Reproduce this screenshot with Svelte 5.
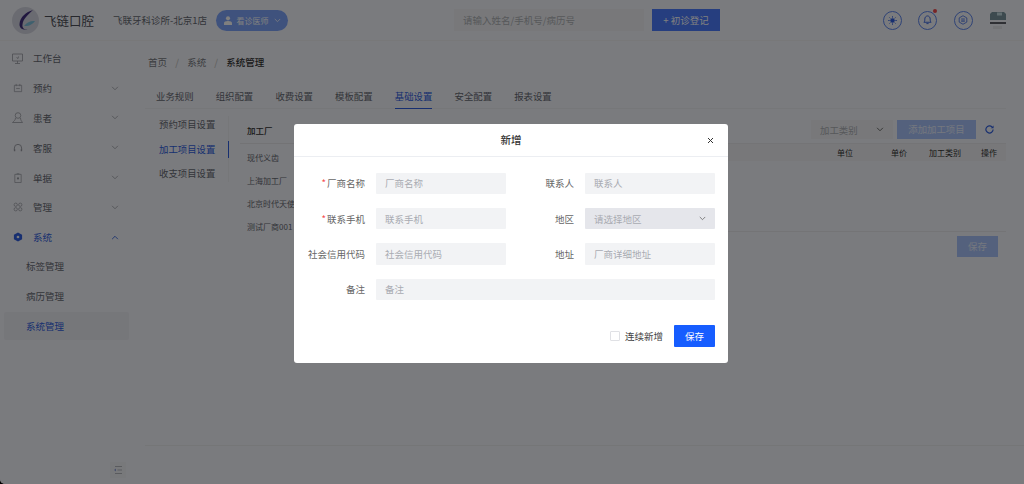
<script>
  const menu = [
    { label: '工作台', icon: 'desk' },
    { label: '预约', icon: 'cal', arrow: 'down' },
    { label: '患者', icon: 'user', arrow: 'down' },
    { label: '客服', icon: 'head', arrow: 'down' },
    { label: '单据', icon: 'doc', arrow: 'down' },
    { label: '管理', icon: 'grid', arrow: 'down' },
    { label: '系统', icon: 'gear', arrow: 'up', active: true }
  ];
  const subMenu = ['标签管理', '病历管理', '系统管理'];
  const tabs = ['业务规则', '组织配置', '收费设置', '模板配置', '基础设置', '安全配置', '报表设置'];
  const sideItems = ['预约项目设置', '加工项目设置', '收支项目设置'];
  const factories = ['现代义齿', '上海加工厂', '北京时代天使', '测试厂商001'];
</script>

<div class="page">
  <header class="topbar">
    <div class="logo">
      <svg width="27" height="27" viewBox="0 0 27 27">
        <circle cx="13.5" cy="13.5" r="13.5" fill="#d5d7e2" />
        <path d="M21 3C14 5 8 10 7.5 17c-.3 4 3 6.500 8 5.500-4 .2-5.500-2-5-5C11 12 16 8 21 3z" fill="#43307f" />
        <path d="M12 19c3-4 7-5.500 11-5-2 3-6 5.500-11 5z" fill="#7fc0dc" />
      </svg>
      <span class="brand">飞链口腔</span>
    </div>
    <span class="clinic">飞联牙科诊所-北京1店</span>
    <button class="role">
      <svg width="8" height="9" viewBox="0 0 9 10"><circle cx="4.500" cy="2.600" r="2.300" fill="#fff" /><path d="M0 10V8c0-1.500 1.500-2.400 4.500-2.400S9 6.500 9 8v2z" fill="#fff" /></svg>
      看诊医师
      <svg width="7" height="5" viewBox="0 0 9 6"><path d="M1 1l3.500 3.500L8 1" fill="none" stroke="#fff" stroke-width="1" /></svg>
    </button>
    <div class="search">请输入姓名/手机号/病历号</div>
    <button class="register">+ 初诊登记</button>
    <div class="tools">
      <span class="tool">
        <svg width="9" height="9" viewBox="0 0 10 10"><circle cx="5" cy="5" r="2.500" fill="#2f5fe0" /><path d="M5 0v2M5 8v2M0 5h2M8 5h2M1.500 1.500l1.200 1.200M7.300 7.300l1.200 1.200M8.500 1.500L7.300 2.700M2.700 7.300L1.500 8.500" stroke="#2f5fe0" stroke-width="0.800" /></svg>
      </span>
      <span class="tool dot">
        <svg width="9" height="10" viewBox="0 0 10 11"><path d="M1 8c1-1 1-2 1-3.500C2 2.500 3.300 1 5 1s3 1.500 3 3.500C8 6 8 7 9 8z" fill="none" stroke="#2f5fe0" /><path d="M3.800 9.500h2.400" stroke="#2f5fe0" /></svg>
      </span>
      <span class="tool">
        <svg width="10" height="10" viewBox="0 0 11 11"><path d="M5.500 .8l4.200 2.400v4.600l-4.200 2.400-4.200-2.400V3.200z" fill="none" stroke="#2f5fe0" stroke-width="0.800" /><path d="M3.500 4.300h4M3.500 5.700h4M3.500 7h4" stroke="#2f5fe0" stroke-width="0.700" /></svg>
      </span>
      <svg class="avatar" width="16" height="18" viewBox="0 0 16 18">
        <path d="M2 0h12l2 2v6H0V2z" fill="#7a959e" /><rect x="7" y="0.500" width="5" height="3" fill="#c5dde2" />
        <rect x="0" y="10" width="16" height="2" fill="#5f6168" /><rect x="3" y="14" width="9" height="3" fill="#e6e8ec" />
      </svg>
    </div>
  </header>

  <div class="body">
    <nav class="sidebar">
      <ul>
        {#each menu as item}
          <li class="menu-item" class:active={item.active}>
            <span class="menu-icon">
              {#if item.icon === 'desk'}
                <svg width="11" height="11" viewBox="0 0 11 11"><path d="M.5 1h10v7H.500zM5.500 8v2.500M3 10.500h5M4.500 4.500l1.500 1 .5-2" fill="none" stroke="#9a9da5" stroke-width="0.800" /></svg>
              {:else if item.icon === 'cal'}
                <svg width="10" height="10" viewBox="0 0 11 11"><path d="M1.500 2.500h8v7h-8zM3.500 1v2.500M7.500 1v2.500M3.500 6h4" fill="none" stroke="#9a9da5" stroke-width="0.800" /></svg>
              {:else if item.icon === 'user'}
                <svg width="11" height="12" viewBox="0 0 11 12"><circle cx="6" cy="3.500" r="2.800" fill="none" stroke="#9a9da5" stroke-width="0.800" /><path d="M3.500 6C3.500 8 2 9 .5 10.500h10C9.500 9 8.500 8 8.500 6" fill="none" stroke="#9a9da5" stroke-width="0.800" /></svg>
              {:else if item.icon === 'head'}
                <svg width="10" height="10" viewBox="0 0 11 11"><path d="M1.500 8V5.500a4 4 0 0 1 8 0V8" fill="none" stroke="#9a9da5" /><path d="M1 7h1.500v2H1zM8.500 7H10v2H8.500z" fill="#9a9da5" /></svg>
              {:else if item.icon === 'doc'}
                <svg width="10" height="10" viewBox="0 0 11 11"><path d="M2 1.500h7v9H2zM4 .8h3" fill="none" stroke="#9a9da5" stroke-width="0.800" /><circle cx="5.500" cy="6" r="1.200" fill="#9a9da5" /></svg>
              {:else if item.icon === 'grid'}
                <svg width="10" height="10" viewBox="0 0 11 11"><g fill="none" stroke="#9a9da5" stroke-width="0.800"><circle cx="3" cy="3" r="1.800" /><circle cx="8" cy="3" r="1.800" /><circle cx="3" cy="8" r="1.800" /><circle cx="8" cy="8" r="1.800" /></g></svg>
              {:else}
                <svg width="10" height="10" viewBox="0 0 11 11"><path d="M5.500 .5l4.500 2.500v5l-4.500 2.500L1 8V3z" fill="#2f5fe0" /><circle cx="5.500" cy="5.500" r="1.500" fill="#f5f6fa" /></svg>
              {/if}
            </span>
            <span class="menu-label">{item.label}</span>
            {#if item.arrow}
              <svg class="arrow" class:up={item.arrow === 'up'} width="8" height="5" viewBox="0 0 9 6"><path d="M1 1l3.500 3.500L8 1" fill="none" stroke="currentColor" stroke-width="1" /></svg>
            {/if}
          </li>
        {/each}
        {#each subMenu as sub, i}
          <li class="sub-item" class:current={i === 2}>{sub}</li>
        {/each}
      </ul>
      <div class="collapse">
        <svg width="9" height="8" viewBox="0 0 9 8"><path d="M1 .5h7M3.500 4H8M1 7.500h7" stroke="#b4b6bd" /><path d="M0 4l2-1.500v3z" fill="#8fa0d8" /></svg>
      </div>
    </nav>

    <main class="content">
      <div class="crumbs">
        <span>首页</span><i>/</i><span>系统</span><i>/</i><b>系统管理</b>
      </div>
      <div class="tabs">
        {#each tabs as tab, i}
          <span class="tab" class:on={i === 4}>{tab}</span>
        {/each}
      </div>
      <div class="panel">
        <div class="side">
          {#each sideItems as s, i}
            <div class="side-item" class:on={i === 1}>{s}</div>
          {/each}
        </div>
        <div class="factory">
          <div class="factory-head">加工厂</div>
          {#each factories as f}
            <div class="factory-row">{f}</div>
          {/each}
        </div>
        <div class="detail">
          <div class="detail-tools">
            <span class="type-select">加工类别
              <svg width="8" height="5" viewBox="0 0 9 6"><path d="M1 1l3.500 3.500L8 1" fill="none" stroke="#555" stroke-width="1" /></svg>
            </span>
            <span class="add-btn">添加加工项目</span>
            <svg width="9" height="9" viewBox="0 0 10 10"><path d="M9 5a4 4 0 1 1-1.200-2.900" fill="none" stroke="#2f5fe0" stroke-width="1.300" /><path d="M9.500 .5v3.200H6.300z" fill="#2f5fe0" /></svg>
          </div>
          <div class="thead">
            <span class="c1">单位</span><span class="c2">单价</span><span class="c3">加工类别</span><span class="c4">操作</span>
          </div>
          <div class="tfoot"><span class="save-off">保存</span></div>
        </div>
      </div>
      <div class="bottom-line"></div>
    </main>
  </div>

  <div class="mask">
    <section class="dialog">
      <div class="dialog-head">
        <h2>新增</h2>
        <svg class="close" width="7" height="7" viewBox="0 0 7 7"><path d="M1 1l5 5M6 1L1 6" stroke="#333" stroke-width="1" /></svg>
      </div>
      <div class="form">
        <label><span class="key"><em>*</em>厂商名称</span><span class="field">厂商名称</span></label>
        <label><span class="key">联系人</span><span class="field">联系人</span></label>
        <label><span class="key"><em>*</em>联系手机</span><span class="field">联系手机</span></label>
        <label><span class="key">地区</span>
          <span class="field select">请选择地区
            <svg width="7" height="5" viewBox="0 0 9 6"><path d="M1 1l3.500 3.500L8 1" fill="none" stroke="#666" stroke-width="1" /></svg>
          </span>
        </label>
        <label><span class="key">社会信用代码</span><span class="field">社会信用代码</span></label>
        <label><span class="key">地址</span><span class="field">厂商详细地址</span></label>
        <label class="wide"><span class="key">备注</span><span class="field">备注</span></label>
      </div>
      <div class="dialog-foot">
        <span class="check"></span>
        <span class="check-text">连续新增</span>
        <button class="save">保存</button>
      </div>
    </section>
  </div>
</div>

<style>
  :global(body) {
    margin: 0;
    background: #000;
  }

  .page {
    position: relative;
    width: 1024px;
    height: 484px;
    overflow: hidden;
    border-bottom-left-radius: 5px;
    background: #f5f6fc;
    font-family: "Noto Sans CJK SC", "Liberation Sans", sans-serif;
    font-size: 9px;
    color: #333;
  }

  button {
    border: 0;
    font: inherit;
    padding: 0;
  }

  .topbar {
    display: flex;
    align-items: center;
    height: 41px;
    box-sizing: border-box;
    border-bottom: 1px solid #f0f0f3;
    padding-left: 12px;
  }

  .logo {
    display: flex;
    align-items: center;
    gap: 5px;
    width: 101px;
  }

  .brand {
    font-size: 12.500px;
    color: #4f515a;
  }

  .clinic {
    width: 103px;
    font-size: 9.500px;
    color: #666a73;
  }

  .role {
    display: flex;
    align-items: center;
    justify-content: center;
    gap: 5px;
    width: 72px;
    height: 21px;
    border-radius: 11px;
    background: #7ea4fb;
    color: #fff;
    font-size: 8px;
  }

  .search {
    width: 190px;
    height: 22px;
    margin-left: 166px;
    padding-left: 9px;
    box-sizing: border-box;
    line-height: 22px;
    background: #f0f1f4;
    color: #aeb0b6;
    font-size: 9.500px;
  }

  .register {
    width: 68px;
    height: 22px;
    margin-left: 8px;
    background: #4d7dff;
    color: #fff;
    font-size: 9.500px;
  }

  .tools {
    display: flex;
    align-items: center;
    margin-left: 163px;
    gap: 16.300px;
  }

  .tool {
    position: relative;
    display: flex;
    align-items: center;
    justify-content: center;
    width: 19px;
    height: 19px;
    border: 1px solid #5f87ee;
    box-sizing: border-box;
    border-radius: 50%;
  }

  .dot::after {
    content: "";
    position: absolute;
    top: -3px;
    right: -1px;
    width: 4px;
    height: 4px;
    border-radius: 50%;
    background: #f0494c;
  }

  .avatar {
    margin-left: 1px;
    margin-top: 1px;
  }

  .body {
    display: flex;
    height: 443px;
  }

  .sidebar {
    position: relative;
    width: 130px;
    flex: none;
    padding-top: 2.500px;
    box-sizing: border-box;
  }

  ul {
    list-style: none;
    margin: 0;
    padding: 0;
  }

  .menu-item {
    display: flex;
    align-items: center;
    height: 29.800px;
    padding-left: 12px;
    color: #666a73;
    font-size: 9.500px;
  }

  .menu-item.active .menu-label {
    color: #2f5fe0;
  }

  .menu-icon {
    display: flex;
    align-items: center;
    justify-content: center;
    width: 11px;
    margin-right: 10px;
  }

  .menu-label {
    flex: 1;
  }

  .arrow {
    margin-right: 11px;
    color: #a0a2a9;
  }

  .arrow.up {
    transform: rotate(180deg);
    color: #2f5fe0;
  }

  .sub-item {
    height: 29.800px;
    margin: 0 1px 0 4px;
    padding-left: 22px;
    line-height: 29.800px;
    color: #666a73;
    font-size: 9.500px;
  }

  .sub-item.current {
    height: 28px;
    line-height: 28px;
    background: #edeef5;
    border-radius: 2px;
    color: #2f5fe0;
  }

  .collapse {
    position: absolute;
    right: 0;
    bottom: 6px;
    width: 16px;
    height: 16px;
    margin-right: 4px;
    display: flex;
    align-items: center;
    justify-content: center;
    background: #f1f2f7;
  }

  .content {
    flex: 1;
    padding: 0 18px 0 15px;
    box-sizing: border-box;
    position: relative;
  }

  .crumbs {
    display: flex;
    align-items: center;
    height: 21px;
    margin-top: 10.500px;
    padding-left: 3px;
    font-size: 9.500px;
    color: #777a82;
  }

  .crumbs i {
    margin: 0 8.200px;
    font-style: normal;
    color: #bbb;
  }

  .crumbs b {
    font-weight: 500;
    color: #333;
  }

  .tabs {
    display: flex;
    gap: 22.200px;
    height: 30px;
    margin-top: 6.500px;
    padding-left: 11px;
    box-sizing: border-box;
    border-bottom: 1px solid #eceef2;
  }

  .tab {
    height: 30px;
    padding-top: 9px;
    box-sizing: border-box;
    line-height: 16px;
    font-size: 9.400px;
    color: #666a73;
  }

  .tab.on {
    color: #2f5fe0;
    border-bottom: 1px solid #2f5fe0;
  }

  .panel {
    display: flex;
    margin-top: 7px;
  }

  .side {
    display: flex;
    flex-direction: column;
    gap: 7.600px;
    width: 84px;
    height: 66px;
    flex: none;
    border-right: 1px solid #eceef2;
    box-sizing: border-box;
  }

  .side-item {
    height: 17px;
    line-height: 17px;
    padding-left: 14px;
    font-size: 9.400px;
    color: #666a73;
  }

  .side-item.on {
    color: #2f5fe0;
    border-right: 1px solid #2f5fe0;
    margin-right: -1px;
  }

  .factory {
    width: 100px;
    flex: none;
    margin-left: 11px;
    box-sizing: border-box;
    font-size: 8px;
    color: #666a73;
  }

  .factory-head {
    height: 28px;
    line-height: 28px;
    padding-left: 7px;
    font-weight: 500;
    font-size: 8.500px;
    color: #333;
    border-bottom: 1px solid #e6e7ea;
    box-sizing: border-box;
  }

  .factory-row {
    height: 23px;
    padding-left: 7px;
    line-height: 28px;
  }

  .detail {
    flex: 1;
    position: relative;
    margin: 4px 0 0 -10px;
  }

  .detail-tools {
    display: flex;
    justify-content: flex-end;
    align-items: center;
    gap: 4px;
    height: 19px;
    padding-right: 12px;
    margin-bottom: 4px;
  }

  .type-select {
    display: flex;
    align-items: center;
    justify-content: space-between;
    width: 82px;
    height: 19px;
    padding: 0 9px;
    box-sizing: border-box;
    background: #f0f1f4;
    color: #aeb0b6;
    font-size: 9.400px;
  }

  .add-btn {
    width: 79px;
    height: 19px;
    margin-right: 5px;
    line-height: 19px;
    text-align: center;
    background: #a8c3fb;
    color: #e8effd;
    font-size: 9.400px;
  }

  .thead {
    position: relative;
    height: 18px;
    background: #f0f1f5;
    border-top: 1px solid #e8e9ec;
    box-sizing: border-box;
    font-size: 8px;
    line-height: 17px;
    color: #333;
  }

  .thead span {
    position: absolute;
    top: 0;
  }

  .c1 { right: 153px; }
  .c2 { right: 99px; }
  .c3 { right: 45px; }
  .c4 { right: 9px; }

  .tfoot {
    display: flex;
    justify-content: flex-end;
    height: 38px;
    margin-top: 70px;
    border-top: 1px solid #e8e9ec;
    padding-top: 4px;
    padding-right: 8px;
    box-sizing: border-box;
  }

  .save-off {
    width: 41px;
    height: 21px;
    line-height: 21px;
    text-align: center;
    background: #a8c3fb;
    color: #e8effd;
    font-size: 9.400px;
  }

  .bottom-line {
    position: absolute;
    left: 15px;
    right: 0;
    top: 404px;
    border-top: 1px solid #ebecef;
  }

  .mask {
    position: absolute;
    inset: 0;
    display: flex;
    justify-content: center;
    align-items: flex-start;
    padding-right: 2px;
    background: rgba(0, 0, 0, 0.5);
  }

  .dialog {
    width: 434px;
    height: 239px;
    margin-top: 124px;
    background: #fff;
    border-radius: 3px;
    box-sizing: border-box;
  }

  .dialog-head {
    position: relative;
    height: 33px;
    border-bottom: 1px solid #eceef2;
    box-sizing: border-box;
    text-align: center;
  }

  h2 {
    margin: 0;
    font-size: 10.500px;
    font-weight: 500;
    line-height: 32px;
    color: #333;
  }

  .close {
    position: absolute;
    right: 14px;
    top: 13px;
  }

  .form {
    display: grid;
    grid-template-columns: 212px 209px;
    row-gap: 13.800px;
    padding-top: 15.700px;
  }

  label {
    display: flex;
    align-items: center;
    height: 21.500px;
  }

  .wide {
    grid-column: 1 / 3;
  }

  .key {
    flex: none;
    width: 71px;
    margin-right: 11px;
    text-align: right;
    font-size: 9.500px;
    color: #666;
  }

  label:nth-child(even) .key {
    width: 68px;
  }

  em {
    font-style: normal;
    color: #f5474a;
    margin-right: 1px;
  }

  .field {
    display: flex;
    align-items: center;
    justify-content: space-between;
    width: 130px;
    height: 21.500px;
    padding: 0 9px;
    box-sizing: border-box;
    background: #f2f3f5;
    border-radius: 1px;
    font-size: 9.500px;
    color: #a9abb2;
  }

  .wide .field {
    width: 339px;
  }

  .field.select {
    background: #e5e6eb;
  }

  .dialog-foot {
    display: flex;
    align-items: center;
    justify-content: flex-end;
    height: 22px;
    margin-top: 25px;
    padding-right: 13px;
  }

  .check {
    width: 8px;
    height: 8px;
    border: 1px solid #e0e1e5;
    border-radius: 1px;
    margin-right: 5px;
  }

  .check-text {
    font-size: 9.500px;
    color: #444;
    margin-right: 11px;
  }

  .save {
    width: 41px;
    height: 22px;
    background: #165dff;
    color: #fff;
    font-size: 9.500px;
    border-radius: 1px;
  }
</style>
